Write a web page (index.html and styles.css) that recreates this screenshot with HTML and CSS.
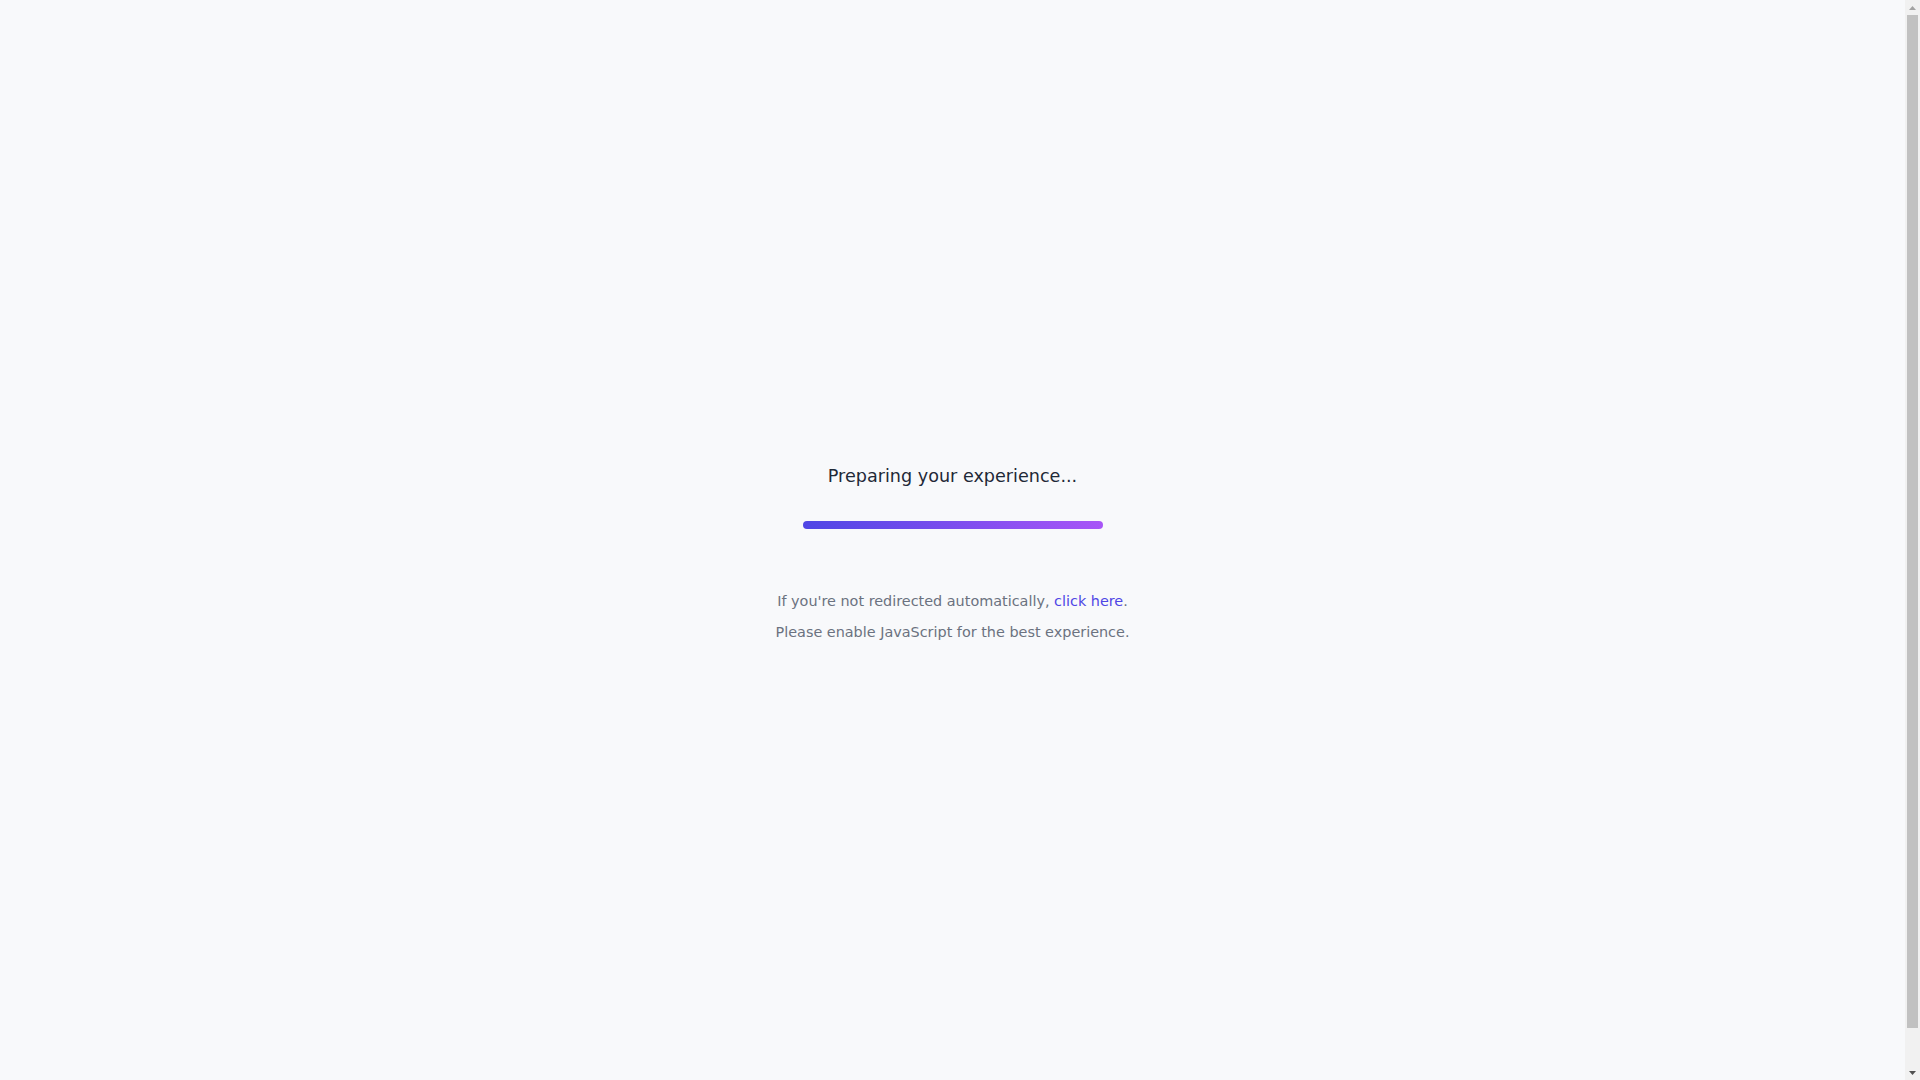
FILE: index.html
```
<!DOCTYPE html>
<html lang="en">
<head>
<meta charset="utf-8">
<title>Redirecting...</title>
<link rel="stylesheet" href="styles.css">
</head>
<body>
<div class="page">
  <main class="loader">
    <h1 class="title">Preparing your experience...</h1>
    <div class="bar"></div>
    <div class="notes">
      <p class="note">If you're not redirected automatically, <a class="link" href="#">click here</a>.</p>
      <p class="note">Please enable JavaScript for the best experience.</p>
    </div>
  </main>
</div>
<div class="scrollbar" aria-hidden="true">
  <div class="sb-btn">
    <svg width="7" height="4" viewBox="0 0 7 4"><path d="M3.5 0L7 4H0Z" fill="#a3a3a3"/></svg>
  </div>
  <div class="sb-track"><div class="sb-thumb"></div></div>
  <div class="sb-btn">
    <svg width="7" height="4" viewBox="0 0 7 4"><path d="M0 0H7L3.5 4Z" fill="#505050"/></svg>
  </div>
</div>
</body>
</html>
```
FILE: styles.css
```
html {
  background: #f8f9fb;
  overflow: hidden;
}
body {
  margin: 8px 23px 8px 8px;
  background: #f8f9fb;
  font-family: "DejaVu Sans", sans-serif;
}
.page {
  min-height: 100vh;
  padding: 5px 0 19px;
  display: flex;
  align-items: center;
  justify-content: center;
}
.loader {
  display: flex;
  flex-direction: column;
  align-items: center;
  text-align: center;
}
.title {
  margin: 0 0 32px;
  font-size: 17.6px;
  font-weight: 400;
  line-height: 26px;
  color: #1f2937;
}
.bar {
  width: 300px;
  height: 8px;
  border-radius: 4px;
  background: linear-gradient(90deg, #4f46e5, #a855f7);
}
.notes {
  margin-top: 61px;
  display: flex;
  flex-direction: column;
  gap: 9px;
}
.note {
  margin: 0;
  font-size: 14.4px;
  line-height: 22px;
  color: #6b7280;
}
.link {
  color: #4f46e5;
  text-decoration: none;
}
.scrollbar {
  position: fixed;
  top: 0;
  right: 0;
  width: 15px;
  height: 100vh;
  background: #f1f1f1;
  display: flex;
  flex-direction: column;
}
.sb-btn {
  height: 15px;
  display: flex;
  align-items: center;
  justify-content: center;
}
.sb-btn svg {
  display: block;
}
.sb-track {
  flex: 1;
  padding: 0 2px 37px;
  display: flex;
}
.sb-thumb {
  flex: 1;
  background: #c1c1c1;
}
```
